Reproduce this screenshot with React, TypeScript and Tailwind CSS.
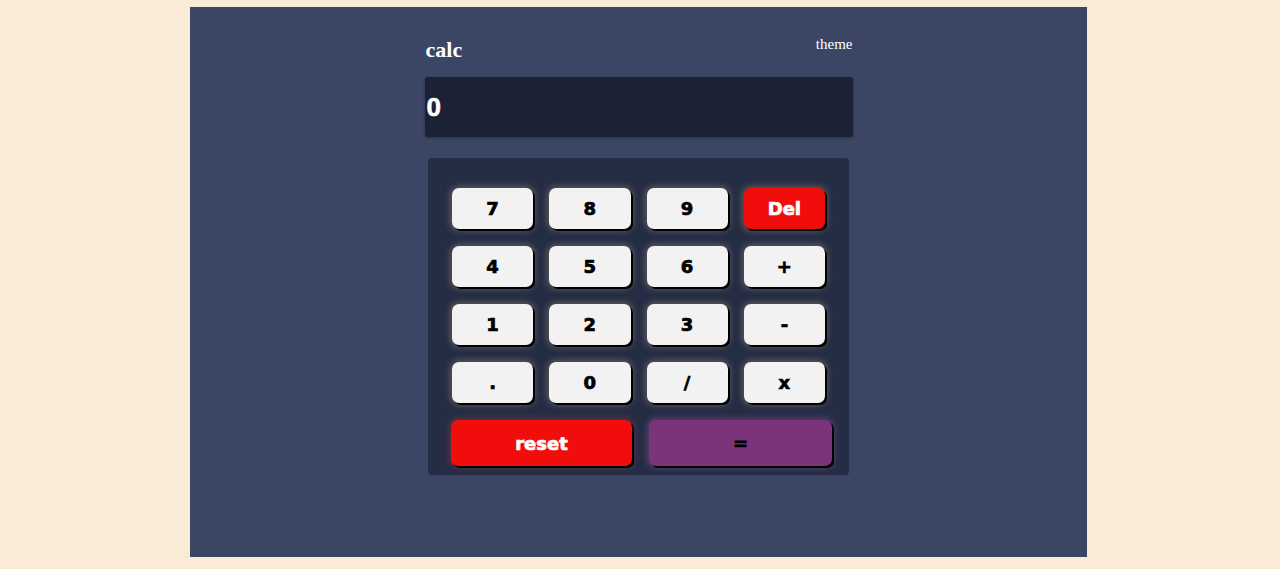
const keys = [
  { label: "7" },
  { label: "8" },
  { label: "9" },
  { label: "Del", red: true },
  { label: "4" },
  { label: "5" },
  { label: "6" },
  { label: "+" },
  { label: "1" },
  { label: "2" },
  { label: "3" },
  { label: "-" },
  { label: "." },
  { label: "0" },
  { label: "/" },
  { label: "x" },
]

const keyFont = { fontFamily: '"DejaVu Sans", sans-serif' }

export default function App() {
  return (
    <div className="min-h-screen bg-[#faebd7] pt-[7px]">
      <div className="ml-[190px] h-[550px] w-[897px] bg-[#3b4664]">
        <div className="mx-auto w-[428px] pt-[30px]">
          <header
            className="flex h-[40px] items-start justify-between text-white"
            style={{ fontFamily: '"Liberation Serif", serif' }}
          >
            <h1 className="ml-[1px] mt-[2px] text-[22px] font-bold leading-[22px]">calc</h1>
            <button className="text-[15px] leading-[15px]">theme</button>
          </header>

          <div className="flex h-[60px] items-center rounded-[3px] bg-[#1b2236] px-[2px] shadow-[0_1px_3px_rgba(0,0,0,0.35)]">
            <span
              className="text-[26px] font-bold text-white [-webkit-text-stroke:0.6px_white]"
              style={{ fontFamily: '"Liberation Sans", Arial, sans-serif' }}
            >
              0
            </span>
          </div>

          <div className="mx-auto mt-[21px] w-[421px] rounded-[4px] bg-[#252d45] px-[24px] pb-[9px] pt-[30px]">
            <div className="grid grid-cols-4 gap-x-[16px] gap-y-[17px]">
              {keys.map((k) => (
                <button
                  key={k.label}
                  style={keyFont}
                  className={`h-[41px] rounded-[7px] text-[18px] font-bold shadow-[2px_2px_0_#000,0_0_6px_2px_rgba(140,125,110,0.55)] [-webkit-text-stroke:0.7px_currentColor] ${
                    k.red ? "bg-[#f20d0d] text-white" : "bg-[#f2f2f2] text-black"
                  }`}
                >
                  {k.label}
                </button>
              ))}
            </div>
            <div className="mt-[17px] flex gap-[17px]">
              <button
                style={keyFont}
                className="-ml-px h-[46px] w-[181px] shrink-0 rounded-[7px] bg-[#f20d0d] text-[18px] font-bold text-white shadow-[2px_2px_0_#000,0_0_6px_2px_rgba(150,60,60,0.45)] [-webkit-text-stroke:0.7px_currentColor]"
              >
                reset
              </button>
              <button
                style={keyFont}
                className="h-[46px] w-[183px] shrink-0 rounded-[7px] bg-[#7b3379] text-[18px] font-bold text-black shadow-[2px_2px_0_#000,0_0_6px_2px_rgba(150,90,150,0.45)] [-webkit-text-stroke:0.7px_currentColor]"
              >
                =
              </button>
            </div>
          </div>
        </div>
      </div>
    </div>
  )
}
